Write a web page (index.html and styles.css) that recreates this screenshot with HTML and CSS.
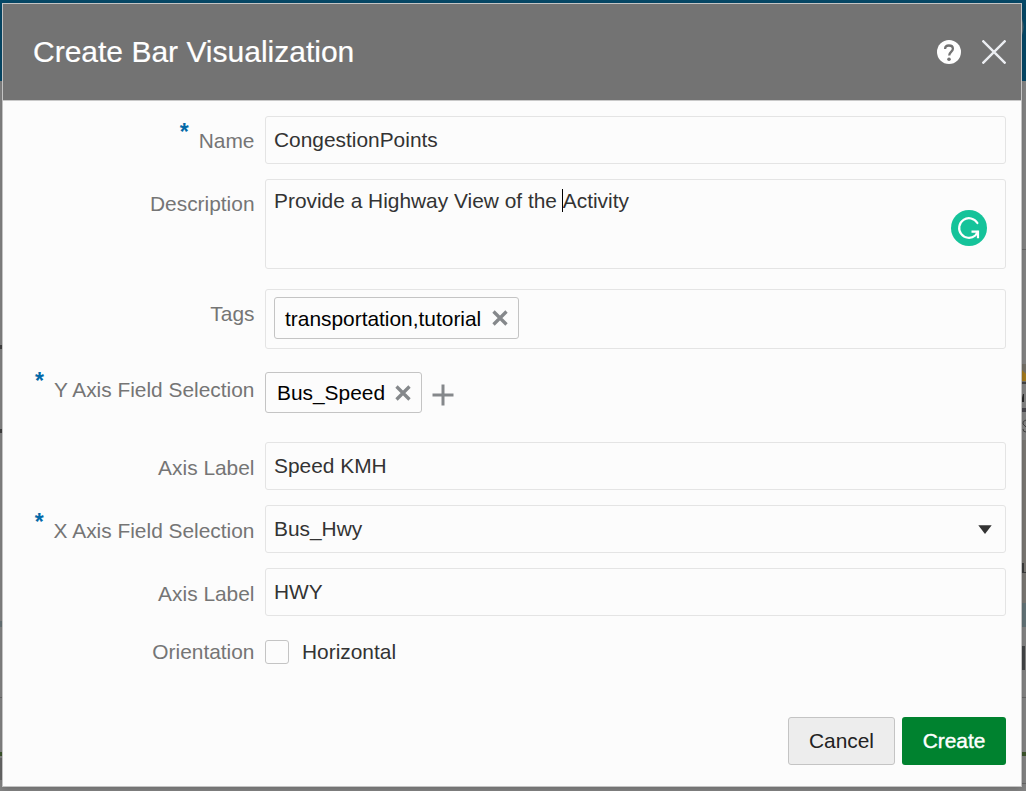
FILE: index.html
```html
<!DOCTYPE html>
<html lang="en">
<head>
<meta charset="utf-8">
<title>Create Bar Visualization</title>
<link rel="stylesheet" href="styles.css">
</head>
<body>
<svg class="backdrop" width="1026" height="791" viewBox="0 0 1026 791" aria-hidden="true">
  <rect width="1026" height="791" fill="#858585"/>
  <rect width="1026" height="81" fill="#064968"/>
  <path d="M1022 19q3 8 0 16z" fill="#536a74"/>
  <path d="M0 345h3v4H0zM0 429h3v4H0z" fill="#424242"/>
  <path d="M0 621h3v6H0z" fill="#687478"/>
  <path d="M0 697h3v1H0zM1022 249h4v1h-4zM1022 697h4v1h-4zM1022 783h4v1h-4z" fill="#686868"/>
  <path d="M0 752h3v4H0zM1022 752h4v4h-4z" fill="#3d562d"/>
  <path d="M0 758h3v22H0z" fill="#686868"/>
  <path d="M1022 364h4v19h-4z" fill="#77736a"/>
  <path d="M1022 370l4 4v7h-4z" fill="#a67c1f"/>
  <path d="M1022 382h4v2h-4z" fill="#454545"/>
  <path d="M1022 398l1-4h1v8h-2z" fill="#292929"/>
  <path d="M1022 408h4v4h-4z" fill="#49474d"/>
  <path d="M1026 420q-4 1-3 4l3 3M1023 429q0 3 3 3" fill="none" stroke="#424242"/>
  <path d="M1022 440h4v187h-4z" fill="#7b7874"/>
  <path d="M1022 563h2v9h2v1h-4z" fill="#3d3d3d"/>
  <path d="M1022 603h4v24h-4z" fill="#647478"/>
  <path d="M1022 646h3v24h-3z" fill="#444648"/>
</svg>
<main class="dialog">
  <header class="dialog-header">
    <h1>Create Bar Visualization</h1>
    <svg class="help" width="24" height="24" viewBox="0 0 24 24"><circle cx="12" cy="12" r="12" fill="#fff"/><path d="M8.1 9c0-2.3 1.6-3.5 3.8-3.5 2.3 0 4 1.2 4 3.3 0 3-3.7 3.3-3.7 6.6" fill="none" stroke="#737373" stroke-width="2.3"/><circle cx="12" cy="19.3" r="1.8" fill="#737373"/></svg>
    <svg class="close" width="24" height="24" viewBox="0 0 24 24"><path d="M.5.5l23 23M23.5.5l-23 23" stroke="#eceef2" stroke-width="2.4"/></svg>
  </header>
  <form class="form">
    <div class="row name">
      <label><span class="star">*</span>Name</label>
      <div class="field">CongestionPoints</div>
    </div>
    <div class="row description">
      <label>Description</label>
      <div class="field area"><span>Provide a Highway View of the <i class="caret"></i>Activity</span>
        <svg class="grammar" width="36" height="36" viewBox="0 0 36 36"><circle cx="18" cy="18" r="18" fill="#15c39a"/><path d="M26.4 13A9.8 9.8 0 1 0 24.3 25.5L26.7 22" fill="none" stroke="#fff" stroke-width="2.2" stroke-linecap="round"/><path d="M20.5 21.7H27v6.5" fill="none" stroke="#fff" stroke-width="2.2"/></svg>
      </div>
    </div>
    <div class="row tags">
      <label>Tags</label>
      <div class="field tag-box"><span class="chip">transportation,tutorial<svg width="16" height="16" viewBox="0 0 16 16"><path d="M1.5 1.5l13 13M14.5 1.5l-13 13"/></svg></span></div>
    </div>
    <div class="row y-axis">
      <label><span class="star">*</span>Y Axis Field Selection</label>
      <div class="selection"><span class="chip">Bus_Speed<svg width="16" height="16" viewBox="0 0 16 16"><path d="M1.5 1.5l13 13M14.5 1.5l-13 13"/></svg></span><svg class="plus" width="22" height="22" viewBox="0 0 22 22"><path d="M11 .5v21M.5 11h21"/></svg></div>
    </div>
    <div class="row y-label">
      <label>Axis Label</label>
      <div class="field">Speed KMH</div>
    </div>
    <div class="row x-axis">
      <label><span class="star">*</span>X Axis Field Selection</label>
      <div class="field select">Bus_Hwy<svg width="14" height="9" viewBox="0 0 14 9"><path d="M.3.3h13.4L7 9z" fill="#333"/></svg></div>
    </div>
    <div class="row x-label">
      <label>Axis Label</label>
      <div class="field">HWY</div>
    </div>
    <div class="row orientation">
      <label>Orientation</label>
      <div class="option"><span class="checkbox"></span>Horizontal</div>
    </div>
  </form>
  <footer class="actions">
    <button class="cancel" type="button">Cancel</button>
    <button class="create" type="button">Create</button>
  </footer>
</main>
</body>
</html>
```
FILE: styles.css
```css
* { box-sizing: border-box; }
body {
  margin: 0;
  height: 791px;
  overflow: hidden;
  padding: 3px 4px 4px 2px;
  font: 20.9px/24px "Liberation Sans", Arial, sans-serif;
  color: #333;
}
.backdrop { position: absolute; top: 0; left: 0; z-index: -1; }
.dialog {
  height: 784px;
  display: flex;
  flex-direction: column;
  background: #fcfcfc;
  border: 1px solid #c4c4c4;
  box-shadow: 0 2px 7px rgba(0, 0, 0, .2);
}
.dialog-header {
  height: 97px;
  flex: none;
  display: flex;
  align-items: center;
  padding: 0 15px 0 30px;
  background: #737373;
  border-bottom: 1px solid #c9c9c9;
  color: #fff;
}
h1 { margin: 0; font-size: 30px; line-height: 36px; font-weight: 400; flex: 1; -webkit-text-stroke: .2px #fff; }
.help { margin-right: 21px; }
.form { flex: 1; padding: 15px 15px 0 0; }
.row { display: grid; grid-template-columns: 251.5px 1fr; column-gap: 10.5px; align-items: start; }
label { display: flex; justify-content: flex-end; color: #757575; padding-top: 13px; white-space: nowrap; }
.star { color: #0369a8; font-size: 23px; font-weight: 700; line-height: 12px; height: 12px; margin: -3px 10px 0 0; -webkit-text-stroke: 0; }
.field { height: 48px; border: 1px solid #e4e4e4; border-radius: 3px; padding: 11px 8px; }
.description { margin-top: 15px; }
.area { position: relative; height: 90px; padding-top: 9px; }
.caret { display: inline-block; width: 1px; height: 23px; margin: 0 0 0 -1px; vertical-align: -4px; background: #000; }
.grammar { position: absolute; top: 30px; right: 18px; }
.tags { margin-top: 20px; }
.tags label { padding-top: 13px; }
.tag-box { height: 60px; padding: 7px 8px; }
.chip { display: inline-flex; align-items: center; height: 42px; padding: 2px 10px 0; border: 1px solid #c4c4c4; border-radius: 3px; color: #000; }
.chip svg { margin: -2px 0 0 11px; fill: none; stroke: #85888b; stroke-width: 3.3; }
.y-axis { margin-top: 23px; height: 41px; }
.y-axis label { padding-top: 6px; }
.selection { display: flex; }
.selection .chip { height: 41px; width: 157px; padding: 1px 0 0 11px; }
.selection .chip svg { margin: 0 0 0 10px; }
.plus { margin: 12px 0 0 10px; fill: none; stroke: #85888b; stroke-width: 3; }
.y-label { margin-top: 29px; }
.y-label label { padding-top: 14px; }
.x-axis, .x-label { margin-top: 15px; }
.x-axis label, .x-label label { padding-top: 14px; }
.select { display: flex; justify-content: space-between; padding-right: 13px; }
.select svg { margin-top: 8px; }
.orientation { margin-top: 24px; }
.orientation label { padding-top: 0; }
.option { display: flex; }
.checkbox { width: 24px; height: 24px; margin-right: 13px; border: 1px solid #c4c4c4; border-radius: 3px; }
.actions { display: flex; justify-content: flex-end; gap: 7px; padding: 0 15px 21px 0; }
button { height: 48px; padding: 0; border-radius: 3px; font: inherit; }
.cancel { width: 107px; background: #ededed; border: 1px solid #c4c4c4; color: #222; }
.create { width: 104px; background: #00822f; border: 0; color: #fff; -webkit-text-stroke: .4px #fff; }
```
